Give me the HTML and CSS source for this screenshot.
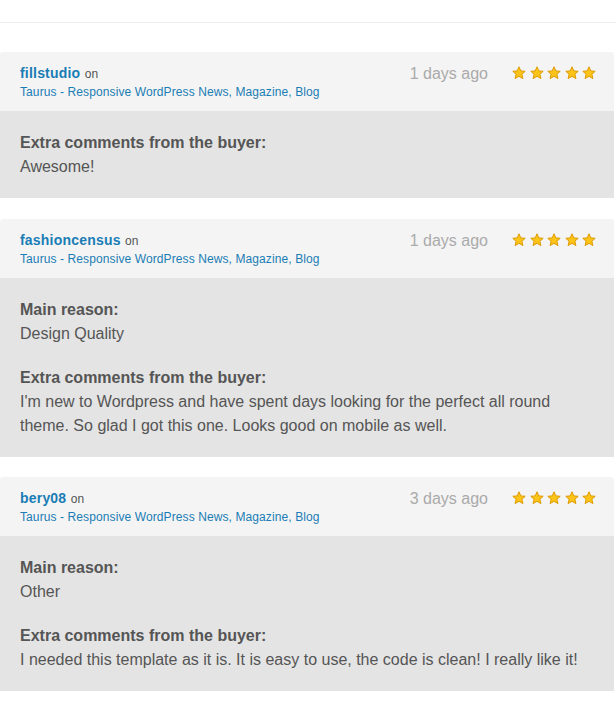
FILE: index.html
```html
<!DOCTYPE html>
<html>
<head>
<meta charset="utf-8">
<link rel="stylesheet" href="styles.css">
</head>
<body>
<div class="topbar"></div>
<div class="reviews">
  <div class="review">
    <div class="review-head">
      <div class="who">
        <div class="line1"><a class="user">fillstudio</a> <span class="on">on</span></div>
        <a class="item">Taurus - Responsive WordPress News, Magazine, Blog</a>
      </div>
      <div class="date">1 days ago</div>
      <div class="stars">
        <svg class="star" viewBox="0 0 14 14"><path d="M7 0.8 L8.8 4.9 L13.2 5.3 L9.9 8.2 L10.9 12.6 L7 10.3 L3.1 12.6 L4.1 8.2 L0.8 5.3 L5.2 4.9 Z"/></svg>
        <svg class="star" viewBox="0 0 14 14"><path d="M7 0.8 L8.8 4.9 L13.2 5.3 L9.9 8.2 L10.9 12.6 L7 10.3 L3.1 12.6 L4.1 8.2 L0.8 5.3 L5.2 4.9 Z"/></svg>
        <svg class="star" viewBox="0 0 14 14"><path d="M7 0.8 L8.8 4.9 L13.2 5.3 L9.9 8.2 L10.9 12.6 L7 10.3 L3.1 12.6 L4.1 8.2 L0.8 5.3 L5.2 4.9 Z"/></svg>
        <svg class="star" viewBox="0 0 14 14"><path d="M7 0.8 L8.8 4.9 L13.2 5.3 L9.9 8.2 L10.9 12.6 L7 10.3 L3.1 12.6 L4.1 8.2 L0.8 5.3 L5.2 4.9 Z"/></svg>
        <svg class="star" viewBox="0 0 14 14"><path d="M7 0.8 L8.8 4.9 L13.2 5.3 L9.9 8.2 L10.9 12.6 L7 10.3 L3.1 12.6 L4.1 8.2 L0.8 5.3 L5.2 4.9 Z"/></svg>
      </div>
    </div>
    <div class="review-body">
      <div class="block">
        <div class="label">Extra comments from the buyer:</div>
        <div class="text">Awesome!</div>
      </div>
    </div>
  </div>

  <div class="review">
    <div class="review-head">
      <div class="who">
        <div class="line1"><a class="user">fashioncensus</a> <span class="on">on</span></div>
        <a class="item">Taurus - Responsive WordPress News, Magazine, Blog</a>
      </div>
      <div class="date">1 days ago</div>
      <div class="stars">
        <svg class="star" viewBox="0 0 14 14"><path d="M7 0.8 L8.8 4.9 L13.2 5.3 L9.9 8.2 L10.9 12.6 L7 10.3 L3.1 12.6 L4.1 8.2 L0.8 5.3 L5.2 4.9 Z"/></svg>
        <svg class="star" viewBox="0 0 14 14"><path d="M7 0.8 L8.8 4.9 L13.2 5.3 L9.9 8.2 L10.9 12.6 L7 10.3 L3.1 12.6 L4.1 8.2 L0.8 5.3 L5.2 4.9 Z"/></svg>
        <svg class="star" viewBox="0 0 14 14"><path d="M7 0.8 L8.8 4.9 L13.2 5.3 L9.9 8.2 L10.9 12.6 L7 10.3 L3.1 12.6 L4.1 8.2 L0.8 5.3 L5.2 4.9 Z"/></svg>
        <svg class="star" viewBox="0 0 14 14"><path d="M7 0.8 L8.8 4.9 L13.2 5.3 L9.9 8.2 L10.9 12.6 L7 10.3 L3.1 12.6 L4.1 8.2 L0.8 5.3 L5.2 4.9 Z"/></svg>
        <svg class="star" viewBox="0 0 14 14"><path d="M7 0.8 L8.8 4.9 L13.2 5.3 L9.9 8.2 L10.9 12.6 L7 10.3 L3.1 12.6 L4.1 8.2 L0.8 5.3 L5.2 4.9 Z"/></svg>
      </div>
    </div>
    <div class="review-body">
      <div class="block">
        <div class="label">Main reason:</div>
        <div class="text">Design Quality</div>
      </div>
      <div class="block">
        <div class="label">Extra comments from the buyer:</div>
        <div class="text">I'm new to Wordpress and have spent days looking for the perfect all round theme. So glad I got this one. Looks good on mobile as well.</div>
      </div>
    </div>
  </div>

  <div class="review">
    <div class="review-head">
      <div class="who">
        <div class="line1"><a class="user">bery08</a> <span class="on">on</span></div>
        <a class="item">Taurus - Responsive WordPress News, Magazine, Blog</a>
      </div>
      <div class="date">3 days ago</div>
      <div class="stars">
        <svg class="star" viewBox="0 0 14 14"><path d="M7 0.8 L8.8 4.9 L13.2 5.3 L9.9 8.2 L10.9 12.6 L7 10.3 L3.1 12.6 L4.1 8.2 L0.8 5.3 L5.2 4.9 Z"/></svg>
        <svg class="star" viewBox="0 0 14 14"><path d="M7 0.8 L8.8 4.9 L13.2 5.3 L9.9 8.2 L10.9 12.6 L7 10.3 L3.1 12.6 L4.1 8.2 L0.8 5.3 L5.2 4.9 Z"/></svg>
        <svg class="star" viewBox="0 0 14 14"><path d="M7 0.8 L8.8 4.9 L13.2 5.3 L9.9 8.2 L10.9 12.6 L7 10.3 L3.1 12.6 L4.1 8.2 L0.8 5.3 L5.2 4.9 Z"/></svg>
        <svg class="star" viewBox="0 0 14 14"><path d="M7 0.8 L8.8 4.9 L13.2 5.3 L9.9 8.2 L10.9 12.6 L7 10.3 L3.1 12.6 L4.1 8.2 L0.8 5.3 L5.2 4.9 Z"/></svg>
        <svg class="star" viewBox="0 0 14 14"><path d="M7 0.8 L8.8 4.9 L13.2 5.3 L9.9 8.2 L10.9 12.6 L7 10.3 L3.1 12.6 L4.1 8.2 L0.8 5.3 L5.2 4.9 Z"/></svg>
      </div>
    </div>
    <div class="review-body">
      <div class="block">
        <div class="label">Main reason:</div>
        <div class="text">Other</div>
      </div>
      <div class="block">
        <div class="label">Extra comments from the buyer:</div>
        <div class="text">I needed this template as it is. It is easy to use, the code is clean! I really like it!</div>
      </div>
    </div>
  </div>
</div>
</body>
</html>
```

FILE: styles.css
```css
html, body {
  margin: 0;
  padding: 0;
  background: #ffffff;
}
body {
  font-family: "Liberation Sans", Arial, sans-serif;
  color: #555555;
}
.topbar {
  height: 22px;
  border-bottom: 1px solid #eeeeee;
}
.reviews {
  padding: 29px 2px 0 0;
  display: flex;
  flex-direction: column;
  gap: 20.5px;
}
.review {
  border-radius: 3px 3px 0 0;
  overflow: hidden;
}
.review-head {
  background: #f4f4f4;
  height: 59px;
  box-sizing: border-box;
  padding: 12px 18px 0 20px;
  display: flex;
  align-items: flex-start;
}
.who {
  flex: 1;
  display: flex;
  flex-direction: column;
}
.line1 {
  line-height: 17px;
  height: 17px;
}
.user {
  color: #1a7db5;
  font-weight: bold;
  font-size: 14px;
  letter-spacing: 0.2px;
}
.on {
  color: #555555;
  font-size: 12px;
}
.item {
  color: #1a7db5;
  font-size: 12px;
  letter-spacing: 0.1px;
  line-height: 16px;
  margin-top: 3px;
}
.date {
  color: #aaaaaa;
  font-size: 16px;
  line-height: 20px;
  margin-top: 0px;
}
.stars {
  display: flex;
  gap: 3.5px;
  margin-left: 24px;
  margin-top: 2px;
}
.star {
  width: 14px;
  height: 14px;
  fill: #fcc419;
  stroke: #dd9a00;
  stroke-width: 1;
  stroke-linejoin: round;
}
.review-body {
  background: #e4e4e4;
  padding: 20px 20px 19px 20px;
  display: flex;
  flex-direction: column;
  gap: 20px;
}
.label {
  font-weight: bold;
  font-size: 16px;
  line-height: 24px;
  color: #555555;
}
.text {
  font-size: 16px;
  line-height: 24px;
  color: #555555;
}
```
